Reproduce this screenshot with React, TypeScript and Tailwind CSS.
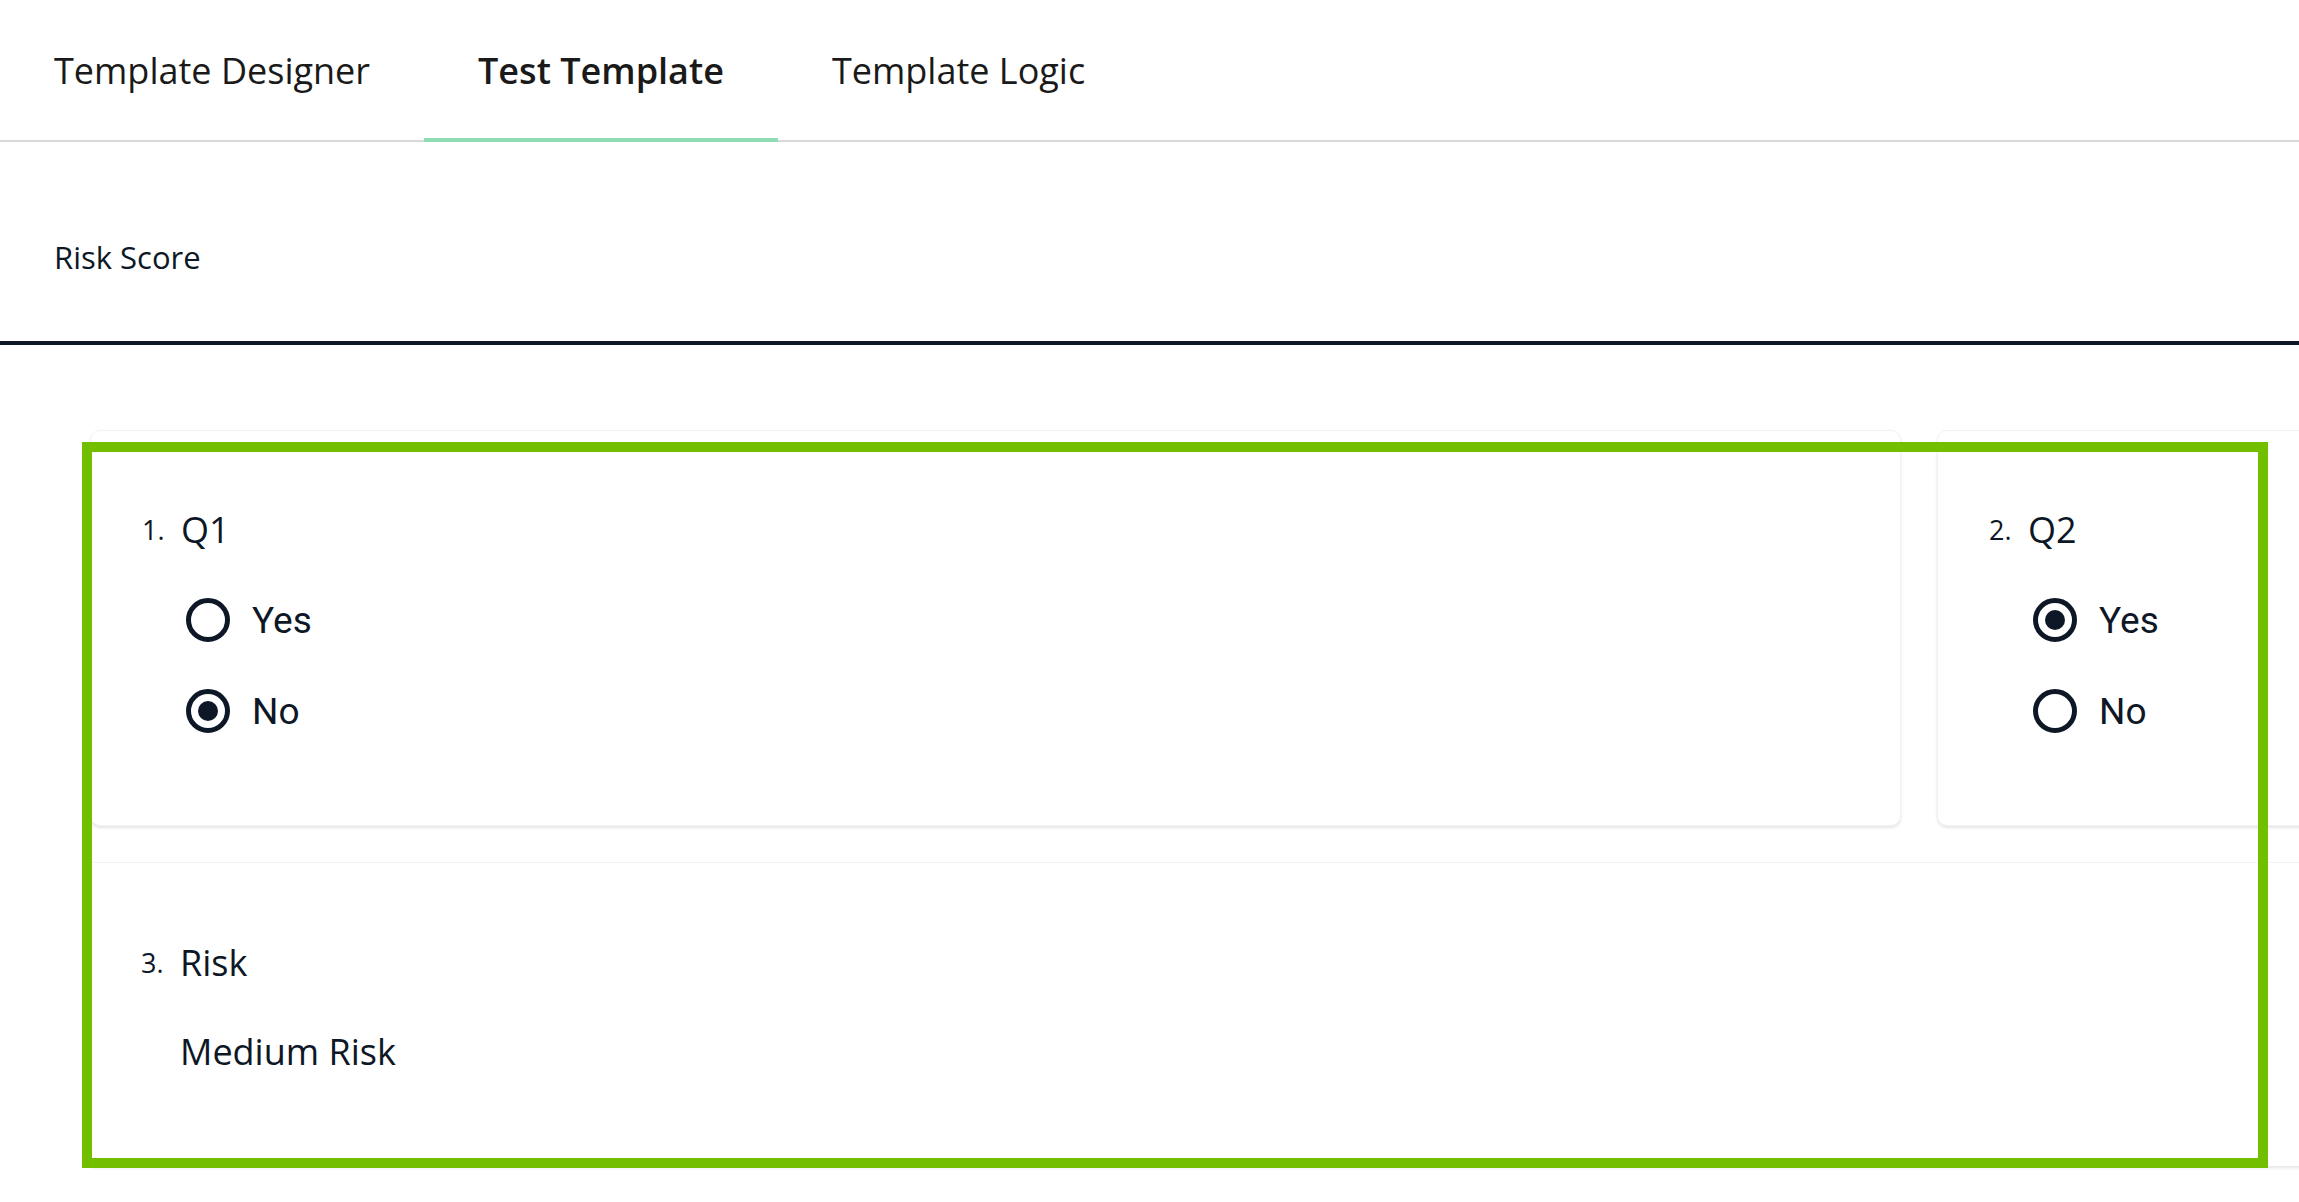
const Radio = ({ checked, label }: { checked?: boolean; label: string }) => (
    <div className="flex items-center h-[44px]">
        <div className="w-[44px] h-[44px] rounded-full border-[5px] border-[#0d1726] flex items-center justify-center shrink-0">
            {checked && <div className="w-[20px] h-[20px] rounded-full bg-[#0d1726]" />}
        </div>
        <span className="ml-[22px] font-['Roboto',sans-serif] text-[37px] leading-none text-[#0d1726]">{label}</span>
    </div>
);

const Question = ({ num, title }: { num: string; title: string }) => (
    <div className="flex items-center h-[54px]">
        <span className="w-[39px] text-[27px] font-medium text-[#0d1726]">{num}</span>
        <span className="text-[36px] text-[#0d1726]">{title}</span>
    </div>
);

const App = () => {
    return (
        <div className="min-h-screen bg-white overflow-hidden font-['Open_Sans',sans-serif] text-[#0d1726]">
            {/* Tabs */}
            <div className="flex h-[142px] border-b-2 border-[#d9d9d9]">
                <button className="h-[142px] px-[54px] text-[36px] text-[#1a1a1a]">Template Designer</button>
                <button className="h-[142px] px-[54px] -mb-[2px] border-b-4 border-[#8edcb3] text-[36px] font-semibold text-[#1a1a1a] pt-[4px]">
                    Test Template
                </button>
                <button className="h-[142px] px-[54px] text-[36px] text-[#1a1a1a]">Template Logic</button>
            </div>

            {/* Section title */}
            <div className="h-[203px] pl-[54px] pt-[94px] border-b-4 border-[#0d1726]">
                <span className="text-[31px] leading-[42px]">Risk Score</span>
            </div>

            {/* Questions */}
            <div className="relative pt-[85px] pl-[90px] pb-[36px]">
                <div className="flex">
                    <div className="w-[1811px] h-[396px] shrink-0 bg-white rounded-[10px] border border-[#f2f2f2] shadow-[0_2px_3px_rgba(0,0,0,0.1)] pl-[51px] pt-[72px]">
                        <Question num="1." title="Q1" />
                        <div className="flex flex-col gap-[47px] mt-[41px] pl-[44px]">
                            <Radio label="Yes" />
                            <Radio label="No" checked />
                        </div>
                    </div>
                    <div className="w-[1000px] h-[396px] shrink-0 ml-[36px] bg-white rounded-[10px] border border-[#f2f2f2] shadow-[0_2px_3px_rgba(0,0,0,0.1)] pl-[51px] pt-[72px]">
                        <Question num="2." title="Q2" />
                        <div className="flex flex-col gap-[47px] mt-[41px] pl-[44px]">
                            <Radio label="Yes" checked />
                            <Radio label="No" />
                        </div>
                    </div>
                </div>

                <div className="w-[2400px] h-[304px] mt-[36px] bg-white border-t border-[#f2f2f2] shadow-[0_2px_3px_rgba(0,0,0,0.1)] pl-[51px] pt-[73px]">
                    <Question num="3." title="Risk" />
                    <div className="mt-[35px] pl-[39px] text-[36px] leading-[54px]">Medium Risk</div>
                </div>

                {/* Highlight overlay */}
                <div className="absolute left-[82px] top-[97px] w-[2186px] h-[726px] border-[10px] border-[#72bf00] pointer-events-none" />
            </div>
        </div>
    );
};

export default App;
